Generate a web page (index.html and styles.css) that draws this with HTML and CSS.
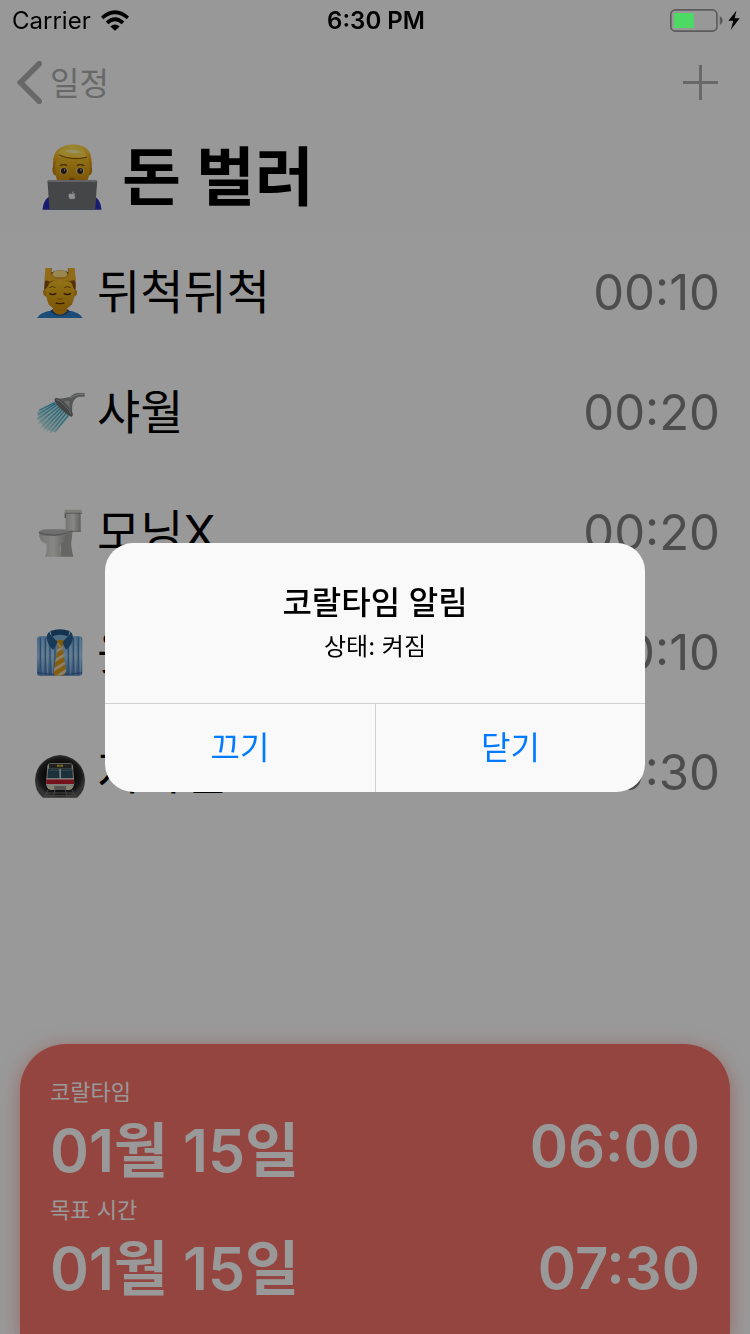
FILE: index.html
```html
<!DOCTYPE html>
<html lang="ko">
<head>
<meta charset="utf-8">
<meta name="viewport" content="width=device-width, initial-scale=1">
<title>돈 벌러</title>
<link rel="stylesheet" href="styles.css">
</head>
<body>
<div class="app">
  <header class="header">
    <div class="status">
      <div class="status-left">
        <span>Carrier</span>
        <svg class="wifi" viewBox="0 0 84 62" aria-hidden="true">
          <path d="M0 19Q42-18 84 19L77 27Q42-3 7 27Z"/>
          <path d="M14 34Q42 8 70 34L62 42Q42 24 22 42Z"/>
          <path d="M28 49Q42 37 56 49L42 62Z"/>
        </svg>
      </div>
      <time class="status-time">6:30 PM</time>
      <div class="status-right">
        <svg class="battery" viewBox="0 0 211 69" aria-hidden="true">
          <rect x="2.500" y="2.500" width="139" height="64" rx="14" fill="none" stroke="#5b5b5b" stroke-width="5"/>
          <rect x="12" y="12" width="60" height="45" fill="#4cd964"/>
          <path d="M150 21Q159 26 159 34.500T150 48Z" fill="#5b5b5b"/>
          <path d="M200 5L176 35H191L183 63L210 28H195Z" fill="#000"/>
        </svg>
      </div>
    </div>
    <nav class="nav">
      <a class="back" href="#">
        <svg class="chevron" viewBox="0 0 74 128" aria-hidden="true"><path d="M66 8L10 64L66 120"/></svg>
        <span class="back-label">일정</span>
      </a>
      <button class="add" type="button" aria-label="추가">
        <svg class="plus" viewBox="0 0 35 35" aria-hidden="true"><path d="M17.500 0V35M0 17.500H35"/></svg>
      </button>
    </nav>
    <h1 class="title">
      <svg class="title-icon" viewBox="65 43 177 198" aria-hidden="true">
        <defs>
          <linearGradient id="hair" x1="0" y1="0" x2="0" y2="1"><stop offset="0" stop-color="#ffe35c"/><stop offset=".5" stop-color="#f5b21c"/><stop offset="1" stop-color="#c67d08"/></linearGradient>
          <linearGradient id="skin" x1="0" y1="0" x2="0" y2="1"><stop offset="0" stop-color="#f5c426"/><stop offset="1" stop-color="#cf8d0c"/></linearGradient>
        </defs>
        <path d="M65 240Q68 204 92 200H215Q239 204 242 240Z" fill="#2830b8"/>
        <path d="M100 112Q93 110 95 124Q97 138 106 138H202Q212 138 214 124Q215 110 208 112Z" fill="#c98a12"/>
        <path d="M104 85Q154 64 206 88Q210 130 199 155H109Q100 128 104 85Z" fill="url(#skin)"/>
        <path d="M97 118Q92 66 118 54Q152 36 188 50Q218 64 212 119L206 108Q206 92 199 83Q158 94 116 78Q104 94 103 112Z" fill="url(#hair)"/>
        <path d="M112 72Q120 52 156 50Q191 52 198 80Q154 90 112 72Z" fill="#ffda4c"/>
        <path d="M132 64Q158 54 183 68Q157 76 132 64Z" fill="#fff0a0"/>
        <path d="M114 76Q154 94 199 83" fill="none" stroke="#8e520b" stroke-width="3"/>
        <path d="M118 108Q127 102 139 107M168 107Q180 102 190 108" fill="none" stroke="#714611" stroke-width="4"/>
        <ellipse cx="129" cy="124" rx="12" ry="10" fill="#e4dbc2"/>
        <ellipse cx="178" cy="124" rx="12" ry="10" fill="#e4dbc2"/>
        <circle cx="129" cy="124" r="9" fill="#3d2412"/>
        <circle cx="178" cy="124" r="9" fill="#3d2412"/>
        <circle cx="131" cy="121" r="2" fill="#fff"/>
        <circle cx="180" cy="121" r="2" fill="#fff"/>
        <ellipse cx="153" cy="148" rx="9" ry="4" fill="#a9570c"/>
        <path d="M84 151H224Q229 151 229 156L223 240H86L80 156Q80 151 84 151Z" fill="#747679"/>
        <path d="M81 154H228" stroke="#b5b7b9" stroke-width="4"/>
        <path d="M153 193Q144 188 143 197Q144 208 150 209Q154 206 158 209Q162 207 164 202Q158 198 163 193Q158 189 153 193ZM153 191Q154 186 159 185Q159 190 153 191Z" fill="#eee"/>
      </svg>
      <span>돈 벌러</span>
    </h1>
  </header>

  <main class="content">
    <ul class="tasks">
      <li class="task">
        <svg class="task-icon" viewBox="45 54 150 150" aria-hidden="true">
          <path d="M51 204Q59 188 98 181H142Q181 188 188 204Z" fill="#2f80c8"/>
          <path d="M91 184Q120 211 149 184L141 176H99Z" fill="#215184"/>
          <path d="M99 160H141V184Q120 205 99 184Z" fill="#d7940d"/>
          <path d="M73 121Q68 119 70 130Q72 140 80 140H161Q170 139 171 129Q172 119 167 121Z" fill="#d38e0b"/>
          <path d="M79 91Q120 78 163 92Q169 132 156 163Q138 182 120 182Q101 180 86 163Q72 130 79 91Z" fill="url(#skin)"/>
          <path d="M73 122Q70 88 86 73Q121 48 155 73Q172 90 166 122L159 111Q158 102 152 97Q120 78 89 98L82 111Z" fill="#8e5211"/>
          <path d="M76 54H94V72Q101 86 121 84Q140 86 145 72V54H164L168 93Q158 88 151 94L137 91L130 96L120 89L110 96L103 91L88 95Q81 88 73 94Z" fill="#f0b526"/>
          <path d="M95 74Q102 61 120 61Q138 60 144 74Q137 86 120 83Q102 86 95 74Z" fill="#ffe587"/>
          <path d="M94 54V72Q101 86 121 84Q140 86 145 72V54" fill="none" stroke="#b9770d" stroke-width="2"/>
          <path d="M88 113Q97 106 106 113M133 113Q143 106 152 113" fill="none" stroke="#87500d" stroke-width="3"/>
          <path d="M88 130Q98 137 109 130M131 130Q142 137 153 130" fill="none" stroke="#50300d" stroke-width="4"/>
          <path d="M113 146Q120 151 127 146" fill="none" stroke="#aa650b" stroke-width="3"/>
          <path d="M107 159Q120 163 133 159" fill="none" stroke="#63320b" stroke-width="4"/>
        </svg>
        <span class="task-name">뒤척뒤척</span>
        <time class="task-time">00:10</time>
      </li>
      <li class="task">
        <svg class="task-icon" viewBox="45 54 150 150" aria-hidden="true">
          <defs>
            <linearGradient id="water" gradientUnits="userSpaceOnUse" x1="130" y1="110" x2="70" y2="175"><stop stop-color="#2fa6c4"/><stop offset=".6" stop-color="#5ab9cd"/><stop offset="1" stop-color="#9fdbe6" stop-opacity=".5"/></linearGradient>
          </defs>
          <path d="M104 94L50 126L56 150L74 176L104 187L148 138Z" fill="#58b6ca" fill-opacity=".3"/>
          <path d="M104 98L57 121M107 101L54 134M111 105L51 148M116 110L54 161M121 115L62 173M126 120L69 181M132 125L80 185M138 130L91 188M145 136L104 187" stroke="url(#water)" stroke-width="4"/>
          <path d="M104 86Q127 87 150 81Q162 69 175 69H194V80H178Q168 81 162 91Q153 105 158 137L154 141Z" fill="#8e8f90"/>
          <path d="M150 84Q162 73 192 73" fill="none" stroke="#c7c9ca" stroke-width="3"/>
          <path d="M104 86Q111 78 134 101Q164 129 157 138Q151 144 126 120Q101 98 104 86Z" fill="#6e7274"/>
          <path d="M108 89Q118 90 133 105Q151 121 153 133" fill="none" stroke="#a9acad" stroke-width="3"/>
          <path d="M131 94L149 112L148 92Z" fill="#b6b9ba"/>
        </svg>
        <span class="task-name">샤월</span>
        <time class="task-time">00:20</time>
      </li>
      <li class="task">
        <svg class="task-icon" viewBox="45 414 150 150" aria-hidden="true">
          <defs><linearGradient id="porcelain"><stop stop-color="#c4c4c2"/><stop offset=".5" stop-color="#e2e2df"/><stop offset="1" stop-color="#a2a2a0"/></linearGradient></defs>
          <path d="M137 428H182V485H137Z" fill="url(#porcelain)"/>
          <path d="M134 419H186V429H134Z" fill="#d0d0cd"/>
          <path d="M134 430H186" stroke="#777" stroke-width="2"/>
          <path d="M136 431V444" stroke="#888" stroke-width="4"/>
          <path d="M123 489L158 481L155 508Q151 526 160 560H123Z" fill="#aaaaa8"/>
          <path d="M57 492H142Q145 512 123 521Q118 540 126 560H75Q83 540 79 522Q57 514 57 492Z" fill="url(#porcelain)"/>
          <path d="M56 488Q57 479 82 478H132Q144 479 144 488Q142 496 123 498H80Q57 497 56 488Z" fill="#bababa"/>
          <path d="M57 488Q100 503 143 488" fill="none" stroke="#858585" stroke-width="3"/>
          <path d="M143 484H182" stroke="#999" stroke-width="3"/>
        </svg>
        <span class="task-name">모닝X</span>
        <time class="task-time">00:20</time>
      </li>
      <li class="task">
        <svg class="task-icon" viewBox="45 54 150 150" aria-hidden="true">
          <defs>
            <linearGradient id="shirt" x1="0" y1="0" x2="0" y2="1"><stop stop-color="#74aee2"/><stop offset=".5" stop-color="#a1cbed"/><stop offset="1" stop-color="#4c7fbd"/></linearGradient>
            <clipPath id="tie"><path d="M111 91H130L128 112L138 183L132 197H102L101 185L113 112Z"/></clipPath>
          </defs>
          <rect x="51" y="79" width="136" height="118" rx="9" fill="url(#shirt)"/>
          <path d="M61 83V195M76 83V195M90 83V195M105 110V195M145 110V195M160 83V195M175 83V195" stroke="#4c80bb" stroke-width="4"/>
          <path d="M69 83V195M83 83V195M98 110V195M152 83V195M167 83V195M181 83V195" stroke="#bddcf2" stroke-width="2"/>
          <path d="M53 188Q119 199 185 188" fill="none" stroke="#3867a0" stroke-width="3"/>
          <path d="M91 63Q120 53 149 63L142 94H98Z" fill="#205587"/>
          <path d="M97 79Q119 70 144 79L128 96H111Z" fill="#84b5d9"/>
          <path d="M88 65Q93 82 115 95L100 119Q84 108 80 83Q81 69 88 65ZM151 65Q148 82 126 95L138 119Q155 108 159 83Q158 69 151 65Z" fill="#285f91"/>
          <g clip-path="url(#tie)">
            <path d="M95 87H145V200H95Z" fill="#dc9d1a"/>
            <path d="M96 132L143 103M96 157L144 128M96 183L144 153M96 209L144 178" stroke="#e5d9b8" stroke-width="8"/>
          </g>
          <path d="M111 93L120 89L130 93L126 112H114Z" fill="#d79312"/>
          <path d="M112 99L122 112" stroke="#e2d5aa" stroke-width="5"/>
        </svg>
        <span class="task-name">옷 입기</span>
        <time class="task-time">00:10</time>
      </li>
      <li class="task">
        <svg class="task-icon" viewBox="45 414 150 150" aria-hidden="true">
          <defs><radialGradient id="tunnel"><stop offset=".5" stop-color="#0c0c0c"/><stop offset=".85" stop-color="#292929"/><stop offset="1" stop-color="#585858"/></radialGradient></defs>
          <path d="M69 563Q45 545 45 510Q47 468 82 446Q120 424 158 446Q193 468 195 510Q195 545 171 563Z" fill="url(#tunnel)"/>
          <path d="M84 540L70 563M105 540L99 563M136 540L142 563M156 540L170 563M78 549H161M73 557H167" stroke="#77756f" stroke-width="3"/>
          <path d="M82 468Q84 459 94 459H149Q157 459 159 468L163 520Q160 536 151 540H91Q80 536 78 522Z" fill="#d1d0ca"/>
          <path d="M87 461H155V476H87Z" fill="#373936"/>
          <path d="M111 467H129" stroke="#d9bd32" stroke-width="6" stroke-dasharray="8 2"/>
          <path d="M84 476H118V505H82ZM123 476H157L159 505H123Z" fill="#315365"/>
          <path d="M85 481H117M124 481H156" stroke="#6d8791" stroke-width="2"/>
          <path d="M79 507H162V522H79Z" fill="#c21d2c"/>
          <path d="M79 507H162" stroke="#e5dfdb" stroke-width="3"/>
          <path d="M103 528H138V540H103Z" fill="#8f8e8a"/>
          <path d="M81 529H100V537H85ZM141 529H160L155 537H141Z" fill="#e1d9ad"/>
        </svg>
        <span class="task-name">지하철</span>
        <time class="task-time">00:30</time>
      </li>
    </ul>

    <section class="card">
      <div class="card-dates">
        <h2 class="card-label">코랄타임</h2>
        <p class="card-date">01월 15일</p>
        <h2 class="card-label">목표 시간</h2>
        <p class="card-date">01월 15일</p>
      </div>
      <div class="card-times">
        <time>06:00</time>
        <time>07:30</time>
      </div>
    </section>
  </main>
</div>

<div class="overlay">
  <div class="alert" role="alertdialog" aria-modal="true" aria-labelledby="alert-title" aria-describedby="alert-message">
    <div class="alert-body">
      <h2 class="alert-title" id="alert-title">코랄타임 알림</h2>
      <p class="alert-message" id="alert-message">상태: 켜짐</p>
    </div>
    <div class="alert-actions">
      <button class="alert-button" type="button">끄기</button>
      <button class="alert-button" type="button">닫기</button>
    </div>
  </div>
</div>
</body>
</html>
```
FILE: styles.css
```css
* {
  box-sizing: border-box;
}

body {
  margin: 0;
  background: #fff;
  color: #000;
  font-family: Inter, "Noto Sans CJK KR", sans-serif;
}

h1,
h2,
p,
ul {
  margin: 0;
  padding: 0;
}

button {
  padding: 0;
  border: 0;
  background: none;
  font: inherit;
}

.app {
  display: flex;
  flex-direction: column;
  min-height: 100vh;
}

.header {
  background: #fdfdfd;
}

.status {
  position: relative;
  z-index: 2;
  display: grid;
  grid-template-columns: 1fr auto 1fr;
  align-items: center;
  height: 40px;
  padding: 0 10px 0 12px;
  font-size: 24px;
}

.status-left {
  display: flex;
  align-items: center;
  gap: 10px;
}

.status-time {
  font-weight: 600;
}

.status-right {
  display: flex;
  justify-content: flex-end;
}

.wifi {
  width: 28px;
  height: 21px;
}

.battery {
  width: 70px;
  height: 23px;
}

.nav {
  display: flex;
  align-items: center;
  justify-content: space-between;
  height: 88px;
  padding: 0 32px 3px 17px;
}

.back {
  display: flex;
  align-items: center;
  gap: 8px;
  color: #adadad;
  font-size: 32px;
  text-decoration: none;
}

.back-label {
  padding-bottom: 4px;
}

.chevron {
  width: 25px;
  height: 43px;
  fill: none;
  stroke: #adadad;
  stroke-width: 17;
  stroke-linecap: round;
}

.add {
  display: flex;
}

.plus {
  width: 35px;
  height: 35px;
  stroke: #adadad;
  stroke-width: 3;
}

.title {
  display: flex;
  align-items: center;
  gap: 20px;
  height: 105px;
  padding: 0 42px 8px;
  font-size: 64px;
  font-weight: 700;
  line-height: 96px;
}

.title-icon {
  width: 60px;
  height: 66px;
}

.content {
  display: flex;
  flex: 1;
  flex-direction: column;
}

.tasks {
  list-style: none;
}

.task {
  display: flex;
  align-items: center;
  gap: 12px;
  height: 120px;
  padding: 0 30px 0 35px;
  font-size: 47px;
}

.task-icon {
  width: 50px;
  height: 50px;
}

.task-name {
  padding-bottom: 10px;
}

.task-time {
  margin-left: auto;
  padding-bottom: 2px;
  color: #808080;
  font-size: 49px;
}

.card {
  display: flex;
  justify-content: space-between;
  margin: auto 20px 0;
  padding: 32px 30px 22px;
  border-radius: 46px 46px 0 0;
  background: #f87369;
  box-shadow: 0 4px 20px rgba(248, 115, 105, 0.6);
  color: #fff;
}

.card-label {
  font-size: 22px;
  font-weight: 400;
  line-height: 32px;
}

.card-date {
  font-size: 59px;
  font-weight: 600;
  line-height: 86px;
}

.card-times {
  display: flex;
  flex-direction: column;
  align-items: flex-end;
  gap: 36px;
  padding-top: 27px;
  font-size: 58px;
  font-weight: 600;
  line-height: 86px;
}

.overlay {
  position: fixed;
  inset: 0;
  z-index: 1;
  display: flex;
  align-items: center;
  justify-content: center;
  background: rgba(0, 0, 0, 0.4);
}

.alert {
  width: 72%;
  overflow: hidden;
  border-radius: 28px;
  background: #f9f9f9;
  text-align: center;
}

.alert-body {
  padding: 36px 32px 38px;
}

.alert-title {
  font-size: 32px;
  font-weight: 500;
  line-height: 48px;
}

.alert-message {
  padding-top: 2px;
  font-size: 24px;
  line-height: 36px;
}

.alert-actions {
  display: grid;
  grid-template-columns: 1fr 1fr;
  border-top: 1px solid #d0d0d2;
}

.alert-button {
  height: 88px;
  padding-bottom: 5px;
  color: #007aff;
  font-size: 32px;
}

.alert-button + .alert-button {
  border-left: 1px solid #d0d0d2;
}
```
